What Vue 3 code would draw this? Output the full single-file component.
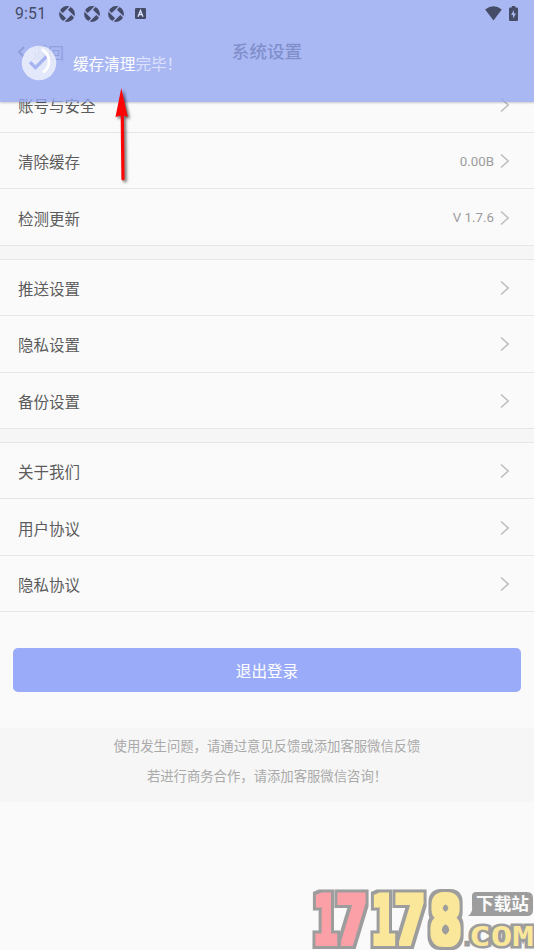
<script setup>
const groups = [
  [
    { label: '账号与安全' },
    { label: '清除缓存', value: '0.00B' },
    { label: '检测更新', value: 'V 1.7.6' },
  ],
  [{ label: '推送设置' }, { label: '隐私设置' }, { label: '备份设置' }],
  [{ label: '关于我们' }, { label: '用户协议' }, { label: '隐私协议' }],
]
</script>

<template>
  <div class="screen">
    <header class="nav">
      <div class="back">
        <svg width="9" height="14" viewBox="0 0 9 14"><path d="M7 2 2 7l5 5" /></svg>
        <span>返回</span>
      </div>
      <h1>系统设置</h1>
    </header>

    <main>
      <section v-for="(group, i) in groups" :key="i" class="group">
        <div v-for="row in group" :key="row.label" class="row">
          <span class="label">{{ row.label }}</span>
          <span v-if="row.value" class="value">{{ row.value }}</span>
          <svg class="chevron" width="10" height="16" viewBox="0 0 10 16"><path d="M1 1.5 8.2 8 1 14.5" /></svg>
        </div>
      </section>
      <button class="logout">退出登录</button>
    </main>

    <footer class="notes">
      <p>使用发生问题，请通过意见反馈或添加客服微信反馈</p>
      <p>若进行商务合作，请添加客服微信咨询！</p>
    </footer>

    <div class="toast">
      <div class="status">
        <span class="clock">9:51</span>
        <svg v-for="n in 3" :key="n" class="swirl" width="16" height="16" viewBox="0 0 16 16">
          <circle cx="8" cy="8" r="7.900" />
          <path class="core" d="M8 3.700 12.300 8 8 12.300 3.700 8Z" />
          <path class="gap" d="M3.700 8 11.500 .2M8 3.700 15.800 11.500M12.300 8 4.500 15.800M8 12.300 .2 4.500" />
        </svg>
        <svg class="badge" width="11" height="11" viewBox="0 0 11 11">
          <rect width="11" height="11" rx="1.2" /><path d="M3 8.7 5.5 2.4 8 8.7M4 6.5h3" />
        </svg>
        <svg class="wifi" width="17" height="15" viewBox="0 0 17 15"><path d="M.2 3.6Q8.5-2.9 16.8 3.6L8.5 14.4Z" /></svg>
        <svg class="battery" width="9" height="15" viewBox="0 0 9 15">
          <path d="M2.8 0h3.4v1.5H8q1 0 1 1V14q0 1-1 1H1q-1 0-1-1V2.500q0-1 1-1h1.800Z" />
          <path class="bolt" d="M5 4 2 9h2v3.500L7 7.500H5Z" />
        </svg>
      </div>
      <div class="message">
        <svg width="36" height="36" viewBox="0 0 36 36">
          <circle cx="18" cy="18" r="17.300" fill="#fff" fill-opacity=".68" />
          <path d="m9 17.200 5.500 5.500L25.500 11.500" fill="none" stroke="#a6b5f2" stroke-width="3.300" />
          <path d="M21 4.500A13.500 13.500 0 0 1 22 27.500" fill="none" stroke="#fff" stroke-width="2.600" />
        </svg>
        <p>缓存清理<span>完毕！</span></p>
      </div>
    </div>

    <svg class="pointer" width="30" height="106" viewBox="0 0 30 106">
      <path d="M10.300 2 4.500 31 9.700 29.500 10 62 10.400 93.500Q12 95.500 13.600 93.500L13.300 62 12.900 29.500 16.800 31Z" />
    </svg>

    <svg class="brand" width="226" height="64" viewBox="0 0 226 64">
      <defs>
        <filter id="block" x="-10" y="-5" width="240" height="75" filterUnits="userSpaceOnUse" color-interpolation-filters="sRGB">
          <feMorphology in="SourceGraphic" operator="dilate" radius="2" result="face" />
          <feMorphology in="SourceAlpha" operator="dilate" radius="5" result="edge" />
          <feFlood flood-color="#9d9d9d" />
          <feComposite in2="edge" operator="in" result="rim" />
          <feMerge><feMergeNode in="rim" /><feMergeNode in="face" /></feMerge>
        </filter>
      </defs>
      <g class="digits" filter="url(#block)">
        <text class="pink" transform="translate(6 58) scale(.57 1)">1</text>
        <text class="pink" transform="translate(28 58) scale(.78 1)">7</text>
        <text transform="translate(64 58) scale(.57 1)">1</text>
        <text transform="translate(86 58) scale(.78 1)">7</text>
        <text transform="translate(121 58) scale(.82 1)">8</text>
      </g>
      <path class="bubble" d="M168 6h51q6 0 6 6v12q0 6-6 6h-46l-13 0q5-4 4-9v-11q0-4 4-4Z" />
      <text class="site" x="168" y="24" textLength="53" lengthAdjust="spacingAndGlyphs">下载站</text>
      <text class="com dot" x="151" y="60">.</text>
      <text class="com" x="161" y="60" textLength="65" lengthAdjust="spacingAndGlyphs">COM</text>
    </svg>
  </div>
</template>

<style>
body { margin: 0; background: #fafafa; }
</style>

<style scoped>
.screen {
  position: relative;
  width: 534px;
  height: 950px;
  overflow: hidden;
  background: #fafafa;
  font-family: Roboto, "Noto Sans CJK SC", sans-serif;
}
.nav {
  box-sizing: border-box;
  height: 76.6px;
  padding-top: 29px;
  display: grid;
  grid-template-columns: 1fr auto 1fr;
  align-items: center;
  border-bottom: 1px solid #f0f0f0;
}
.back { display: flex; align-items: center; gap: 6px; padding-left: 17px; font-size: 16px; color: #808080; }
.back path { fill: none; stroke: #777; stroke-width: 2; }
h1 { margin: 0; font-size: 17.6px; line-height: 24px; font-weight: 500; color: #303030; }
.group + .group { border-top: 14px solid #f6f6f6; }
.group + .group .row:first-child { box-shadow: 0 -1px #e6e6e6; }
.row {
  box-sizing: border-box;
  height: 56.4px;
  padding: 1px 24px 0 18px;
  display: flex;
  align-items: center;
  border-bottom: 1px solid #e6e6e6;
}
.label { flex: 1; font-size: 15.5px; color: #5c5c5c; }
.value { margin-right: 6px; font-size: 13.3px; color: #9c9c9c; }
.chevron path { fill: none; stroke: #bcbcbc; stroke-width: 1.5; }
.logout {
  display: block;
  width: 508px;
  height: 44px;
  margin: 36.2px 13px 36px;
  padding: 0;
  border: 0;
  border-radius: 5px;
  background: #9aacf9;
  color: #fff;
  font: 15.6px Roboto, "Noto Sans CJK SC", sans-serif;
}
.notes { box-sizing: border-box; height: 74px; padding-top: 4px; background: #f6f6f6; text-align: center; }
.notes p { margin: 0; font-size: 13.35px; line-height: 29.5px; color: #aaa; }
.toast {
  position: absolute;
  inset: 0 0 auto;
  height: 102px;
  background: rgba(149, 166, 241, .8);
  box-shadow: 0 1px 2px rgba(0, 0, 0, .2);
}
.status { display: flex; align-items: center; height: 27px; padding: 0 16px 0 15px; color: #454c67; fill: #454c67; }
.clock { width: 44px; font-size: 15.8px; letter-spacing: .2px; }
.swirl { margin-right: 8.6px; }
.core { fill: #a9b7f3; }
.gap { fill: none; stroke: #a9b7f3; stroke-width: 1.3; }
.badge { margin-left: 2px; }
.badge path { fill: none; stroke: #dbe1ff; stroke-width: 1.3; }
.wifi { margin-left: auto; margin-right: 7px; }
.bolt { fill: #a9b7f3; }
.message { display: flex; align-items: center; gap: 16px; height: 36px; padding: 18px 0 0 21px; }
.message p { margin: 0; font-size: 15.6px; color: #fff; }
.message span { color: #dce2fc; }
.pointer { position: absolute; left: 111px; top: 86px; overflow: visible; }
.pointer path { fill: #fb0505; filter: drop-shadow(2px 2px 1.5px rgba(0, 0, 0, .6)); }
.brand { position: absolute; left: 308px; top: 886px; overflow: visible; }
.brand text { font-family: "DejaVu Sans Mono", monospace; font-weight: 700; fill: #fae79a; }
.digits text { font-size: 67px; }
.brand .pink { fill: #fca0a7; }
.bubble { fill: #9d9d9d; }
.brand .site { font: 700 17px "Noto Sans CJK SC", sans-serif; fill: #fafafa; }
.brand .com { font-size: 27px; paint-order: stroke; stroke: #9d9d9d; stroke-width: 5px; stroke-linejoin: miter; }
.brand .dot { fill: #9d9d9d; stroke-width: 1px; }
</style>
